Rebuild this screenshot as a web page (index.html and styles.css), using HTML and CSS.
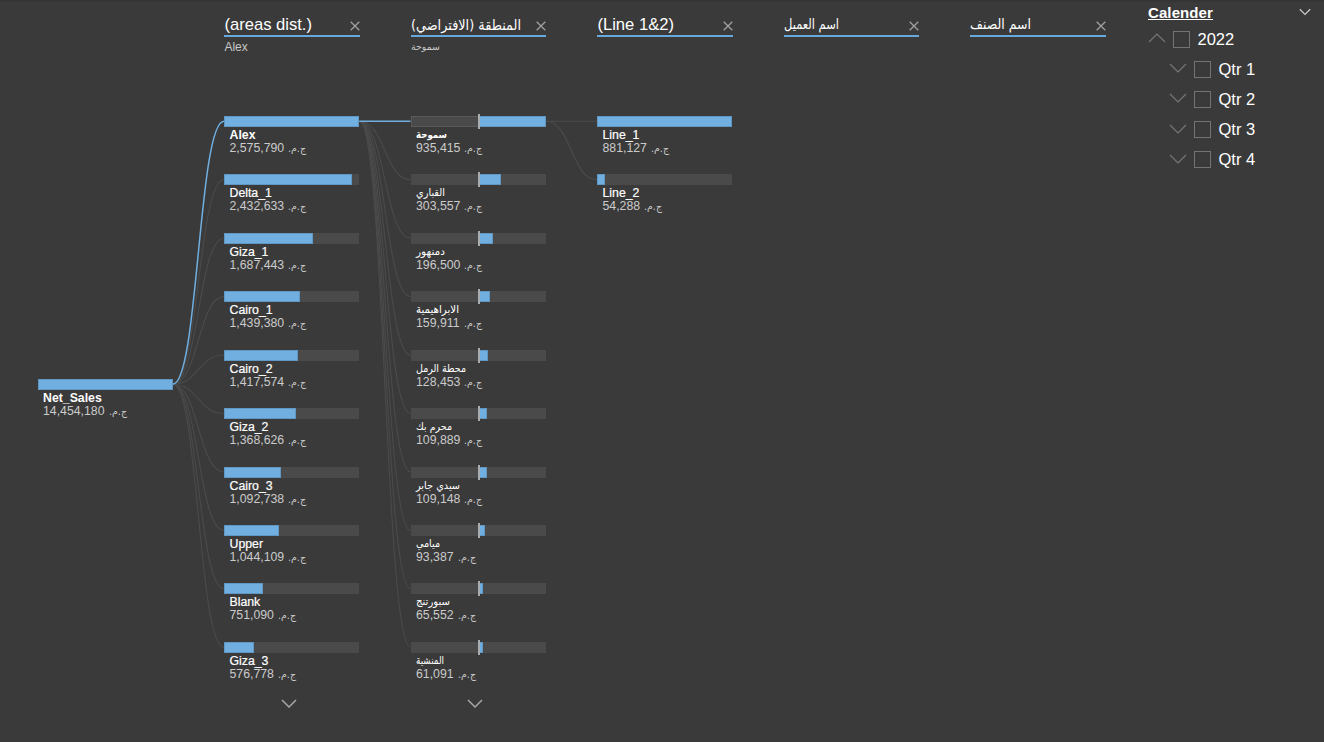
FILE: index.html
```html
<!DOCTYPE html>
<html lang="en">
<head>
<meta charset="utf-8">
<title>Net Sales</title>
<link rel="stylesheet" href="styles.css">
</head>
<body>
<main class="report">
  <section class="tree">
    <header class="levels" id="levels"></header>
    <div class="canvas" id="canvas">
      <svg class="links" id="links" width="1140" height="742"></svg>
    </div>
  </section>
  <aside class="slicer">
    <div class="slicer-head">
      <h2 class="slicer-title">Calender</h2>
      <svg class="slicer-menu" width="12" height="8" viewBox="0 0 12 8"><path d="M.8 1.2 6 6.4l5.200-5.200"/></svg>
    </div>
    <ul class="slicer-list">
      <li class="item"><svg class="chev" width="18" height="10" viewBox="0 0 18 10"><path d="M1 9 9 1l8 8"/></svg><i class="box"></i>2022</li>
      <li class="item child"><svg class="chev" width="18" height="10" viewBox="0 0 18 10"><path d="M1 1l8 8 8-8"/></svg><i class="box"></i>Qtr 1</li>
      <li class="item child"><svg class="chev" width="18" height="10" viewBox="0 0 18 10"><path d="M1 1l8 8 8-8"/></svg><i class="box"></i>Qtr 2</li>
      <li class="item child"><svg class="chev" width="18" height="10" viewBox="0 0 18 10"><path d="M1 1l8 8 8-8"/></svg><i class="box"></i>Qtr 3</li>
      <li class="item child"><svg class="chev" width="18" height="10" viewBox="0 0 18 10"><path d="M1 1l8 8 8-8"/></svg><i class="box"></i>Qtr 4</li>
    </ul>
  </aside>
</main>
<script src="tree.js"></script>
</body>
</html>
```
FILE: styles.css
```css
* { box-sizing: border-box; }
body {
  margin: 0;
  background: #3a3a3a;
  color: #fff;
  font-family: "Liberation Sans", Arial, "DejaVu Sans", sans-serif;
}
.report {
  position: relative;
  display: flex;
  width: 1324px;
  height: 742px;
  overflow: hidden;
  border-top: 2px solid #353535;
}
.tree { width: 1140px; flex: none; }
.levels {
  display: flex;
  gap: 51px;
  padding: 11px 0 0 224.4px;
}
.level { width: 135.500px; flex: none; }
.level-head {
  display: flex;
  align-items: center;
  justify-content: space-between;
  height: 24px;
  padding-top: 2px;
  border-bottom: 2px solid #68a8da;
  font-size: 16.600px;
  white-space: nowrap;
}
.close { margin-top: 1px; stroke: #a0a0a0; stroke-width: 1.300; fill: none; }
.level-sub {
  height: 18px;
  font-size: 12px;
  line-height: 20px;
  color: #c8c8c8;
}
.ar { display: inline-block; vertical-align: top; overflow: visible; }
.ar text { direction: rtl; font-family: "DejaVu Sans", sans-serif; fill: currentColor; }
.canvas { position: absolute; left: 0; top: -2px; }
.links { position: absolute; left: 0; top: 0; fill: none; }
.link { stroke: #4b4b4b; stroke-width: 1.100; }
.link.on { stroke: #70afe0; stroke-width: 1.500; }
.node { position: absolute; width: 135.200px; }
.track { position: relative; height: 11px; background: #4a4a4a; }
.selected .track { box-shadow: inset 0 0 0 1px #5a5a5a; }
.fill { height: 11px; background: #70afe0; border: 1px solid #6198c3; }
.half .fill { margin-left: 67.500px; }
.tick { position: absolute; left: 67px; top: -2px; width: 2px; height: 15px; background: #a9adb0; }
.name, .value {
  height: 13px;
  padding-left: 5.500px;
  font-size: 12.300px;
  line-height: 16px;
  white-space: nowrap;
}
.name { -webkit-text-stroke: .2px #fff; }
.selected .name { font-weight: bold; -webkit-text-stroke: 0; }
.value { color: #cbcbcb; }
.value .ar { margin-left: 4px; }
.more { position: absolute; stroke: #a6a6a6; stroke-width: 1.500; fill: none; }
.slicer { flex: 1; padding: 2px 13px 0 8px; }
.slicer-head { display: flex; justify-content: space-between; align-items: flex-start; height: 20px; }
.slicer-title { margin: 0; font-size: 15px; line-height: 18px; text-decoration: underline; letter-spacing: .1px; }
.slicer-menu { margin-top: 4px; stroke: #c8c8c8; stroke-width: 1.300; fill: none; }
.slicer-list { margin: 0; padding: 0; list-style: none; }
.item { display: flex; align-items: center; height: 30.200px; font-size: 16.500px; }
.child { padding-left: 21px; }
.chev { stroke: #777; stroke-width: 1.100; fill: none; margin-top: -2px; }
.box { width: 17px; height: 17px; margin: 0 8px 0 6.500px; border: 1px solid #777370; }
```
FILE: tree.js
```javascript
const PITCH_X = 186.5, PITCH_Y = 58.44, LEFT = 37.5, TOP = 115.9, BAR = 135.2;

// Arabic label fitted to a fixed width
const ar = (text, width, size, height, base, weight = 400) =>
  `<svg class="ar" width="${width}" height="${height}"><text x="${width}" y="${base}" font-size="${size}" font-weight="${weight}" textLength="${width}" lengthAdjust="spacingAndGlyphs">${text}</text></svg>`;

const levels = [
  ['(areas dist.)', 'Alex'],
  [ar('المنطقة (الافتراضي)', 110, 14.5, 22, 16), ar('سموحة', 29, 10, 18, 13)],
  ['(Line 1&amp;2)', ''],
  [ar('اسم العميل', 55, 14, 22, 15), ''],
  [ar('اسم الصنف', 61, 14, 22, 15), '']
];
document.getElementById('levels').innerHTML = levels.map(([t, s]) =>
  `<div class="level"><div class="level-head"><span>${t}</span><svg class="close" width="10" height="10" viewBox="0 0 10 10"><path d="M.7.700l8.600 8.600M9.300.700.700 9.300"/></svg></div><div class="level-sub">${s}</div></div>`).join('');

const columns = [
  { max: 14454180, rows: [['Net_Sales', 14454180]] },
  { max: 2575790, rows: [['Alex', 2575790], ['Delta_1', 2432633], ['Giza_1', 1687443], ['Cairo_1', 1439380], ['Cairo_2', 1417574], ['Giza_2', 1368626], ['Cairo_3', 1092738], ['Upper', 1044109], ['Blank', 751090], ['Giza_3', 576778]] },
  { max: 935415, half: true, rows: [['سموحة', 935415, 31], ['القباري', 303557, 29], ['دمنهور', 196500, 29], ['الابراهيمية', 159911, 43], ['محطة الرمل', 128453, 50], ['محرم بك', 109889, 36], ['سيدي جابر', 109148, 44], ['ميامي', 93387, 24], ['سبورتنج', 65552, 34], ['المنشية', 61091, 28]] },
  { max: 881127, rows: [['Line_1', 881127], ['Line_2', 54288]] }
];

let html = '';
columns.forEach((col, c) => col.rows.forEach(([name, value, w], r) => {
  const x = LEFT + c * PITCH_X;
  const y = c === 0 ? 379 : TOP + r * PITCH_Y;
  const selected = r === 0 && c < 3;
  const width = value / col.max * (col.half ? BAR / 2 : BAR) + (col.half && r ? 0.7 : 0);
  const label = w ? ar(name, w, 10.5, 13, 11, selected ? 700 : 400) : name;
  html += `<div class="node${selected ? ' selected' : ''}${col.half ? ' half' : ''}" style="left:${x}px;top:${y}px">
    <div class="track"><div class="fill" style="width:${width}px"></div>${col.half ? '<i class="tick"></i>' : ''}</div>
    <div class="name">${label}</div>
    <div class="value">${value.toLocaleString('en-US')}${ar('ج.م.', 18, 10, 13, 12)}</div></div>`;
}));
[288.5, 475].forEach(x => {
  html += `<svg class="more" style="left:${x - 8}px;top:699px" width="16" height="9" viewBox="0 0 16 9"><path d="M1 1l7 7 7-7"/></svg>`;
});
document.getElementById('canvas').insertAdjacentHTML('beforeend', html);

let links = '';
[[0, 384.3, 10], [1, 121.3, 10], [2, 121.3, 2]].forEach(([c, y0, n]) => {
  const x0 = LEFT + c * PITCH_X + BAR, x1 = x0 + PITCH_X - BAR, m = (x0 + x1) / 2;
  for (let r = n - 1; r >= 0; r--) {
    const y1 = 121.3 + r * PITCH_Y;
    links += `<path class="link${r === 0 && c < 2 ? ' on' : ''}" d="M${x0} ${y0}C${m} ${y0} ${m} ${y1} ${x1} ${y1}"/>`;
  }
});
document.getElementById('links').innerHTML = links;
```
